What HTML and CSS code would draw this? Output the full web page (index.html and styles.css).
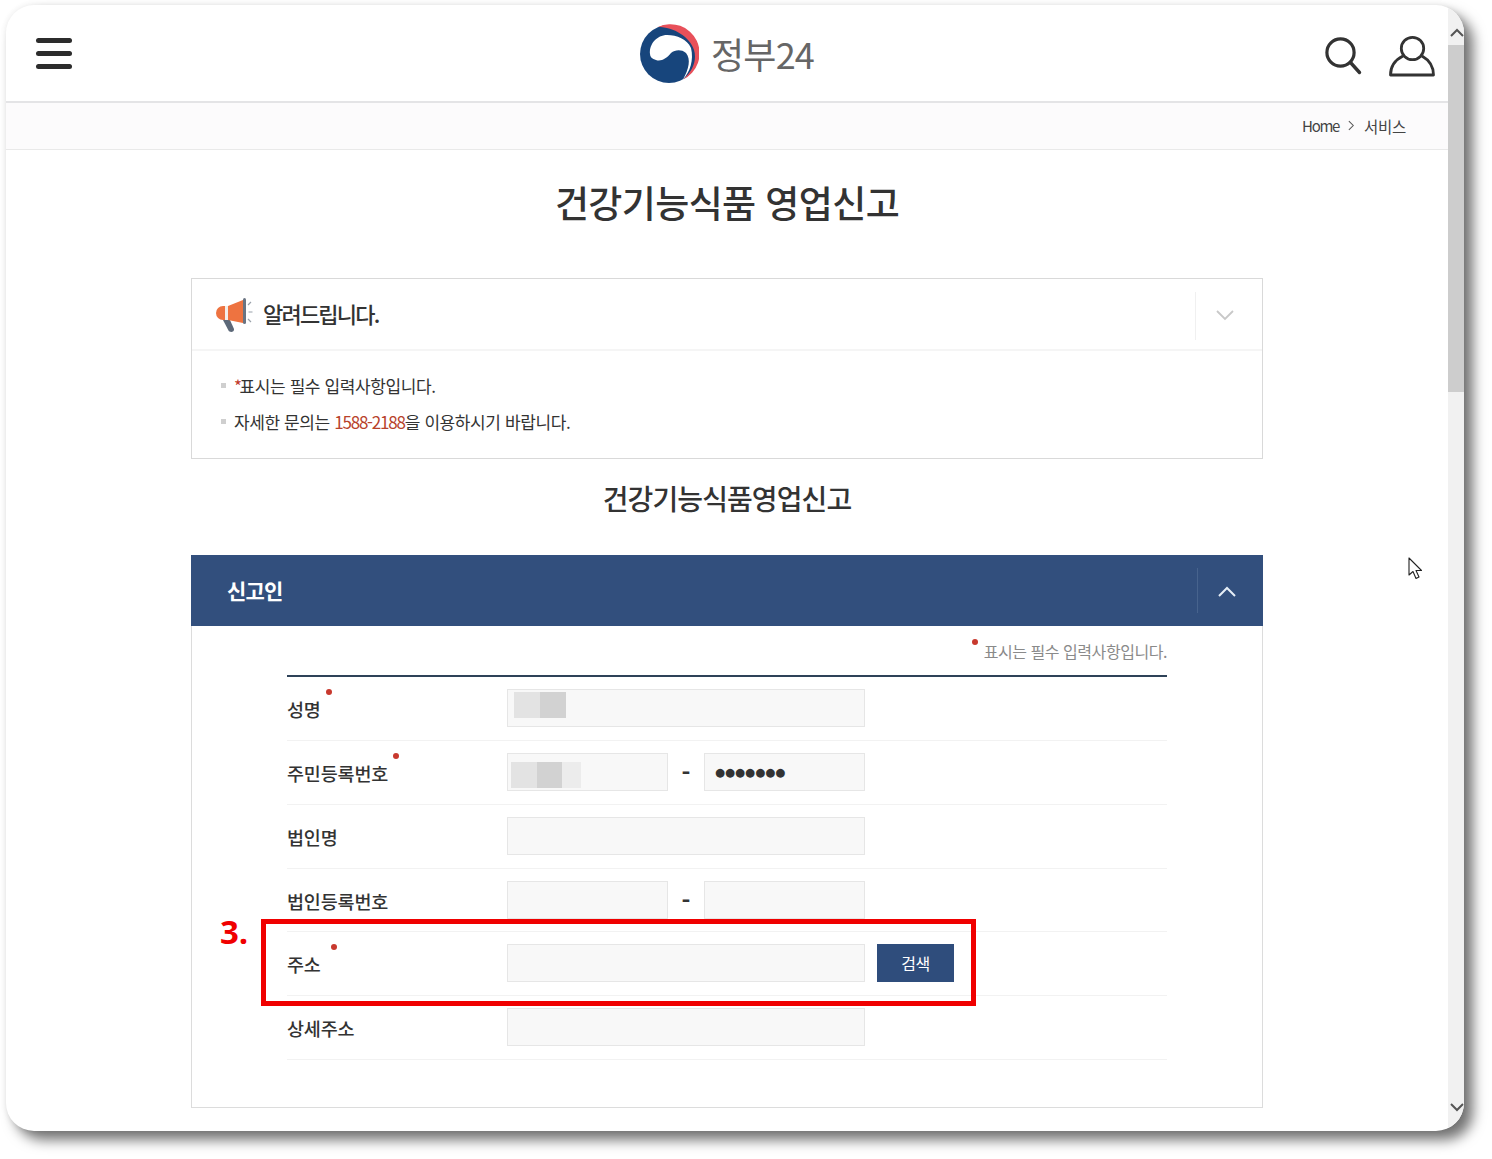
FILE: index.html
```html
<!DOCTYPE html>
<html lang="ko">
<head>
<meta charset="utf-8">
<title>건강기능식품 영업신고</title>
<link rel="stylesheet" href="styles.css">
</head>
<body>
<div class="window">
  <div class="page">
    <header class="topbar">
      <div class="burger"><i></i><i></i><i></i></div>
      <div class="logo">
        <svg class="logo-mark" viewBox="0 0 60 60" width="60" height="60">
          <circle cx="30" cy="30" r="29" fill="#17457c"/>
          <path d="M19 3A29 29 0 0 1 44 55.500C54 47 58 36 55 26C51 13 35 3 19 3Z" fill="#e8505a"/>
          <path d="M11 30C10 20 18 11 28 11C38 11 48 15 52 24C55 36 51 48 44 55.500C50 45 52 35 47 29C42 25 36 26 32 29C28 34 22 38 17 36C13 35 11 33 11 30Z" fill="#fff"/>
        </svg>
        <span class="logo-text">정부24</span>
      </div>
      <div class="top-icons">
        <svg viewBox="0 0 40 42" width="40" height="42"><circle cx="17.500" cy="17.500" r="13.600" fill="none" stroke="#333" stroke-width="3.200"/><path d="M27.500 27.500L36.500 37.500" stroke="#333" stroke-width="3.400" stroke-linecap="round"/></svg>
        <svg viewBox="0 0 46 42" width="46" height="42"><circle cx="23.500" cy="13.500" r="11.200" fill="none" stroke="#333" stroke-width="2.800"/><path d="M14 21C6 25 1.500 32 1.500 40H44.500C44.500 32 40 25 33 21" fill="none" stroke="#333" stroke-width="2.800" stroke-linejoin="round"/></svg>
      </div>
    </header>
    <nav class="crumbs">
      <span class="crumb-home">Home</span>
      <svg viewBox="0 0 8 12" width="7" height="11"><path d="M1 1l5 5-5 5" fill="none" stroke="#555" stroke-width="1.200"/></svg>
      <span class="crumb-current">서비스</span>
    </nav>
    <main class="content">
      <h1 class="page-title">건강기능식품 영업신고</h1>
      <section class="notice">
        <div class="notice-head">
          <div class="notice-title">
            <svg class="megaphone" viewBox="0 0 38 36" width="38" height="36">
              <path d="M8 23H15L19 32C19.500 35 15 36 13.500 33.500Z" fill="#5c6878"/>
              <path d="M10 9H8A7 7 0 0 0 8 23H10Z" fill="#ee7340"/>
              <rect x="10" y="9" width="3" height="14" fill="#f3eee9"/>
              <path d="M13 9L28 3V26L13 23Z" fill="#ee7340"/>
              <rect x="28" y="1" width="3" height="26" rx="1.500" fill="#6a7482"/>
              <path d="M33 8l3-3M33.500 15h4M33 22l3 3" stroke="#9aa2ab" stroke-width="1.200"/>
            </svg>
            <span>알려드립니다.</span>
          </div>
          <div class="notice-toggle">
            <svg viewBox="0 0 18 11" width="18" height="11"><path d="M1 1l8 8 8-8" fill="none" stroke="#c8c8c8" stroke-width="1.800"/></svg>
          </div>
        </div>
        <ul class="notice-list">
          <li><span class="star">*</span>표시는 필수 입력사항입니다.</li>
          <li>자세한 문의는 <span class="phone">1588-2188</span>을 이용하시기 바랍니다.</li>
        </ul>
      </section>
      <h2 class="form-title">건강기능식품영업신고</h2>
      <section class="panel">
        <div class="panel-head">
          <span class="panel-title">신고인</span>
          <div class="panel-toggle">
            <svg viewBox="0 0 18 11" width="18" height="11"><path d="M1 10l8-8 8 8" fill="none" stroke="#e6eef6" stroke-width="2"/></svg>
          </div>
        </div>
        <div class="panel-body">
          <p class="required-note"><i class="dot note-dot"></i>표시는 필수 입력사항입니다.</p>
          <div class="rows">
            <div class="row">
              <label class="row-label req">성명<i class="dot"></i></label>
              <div class="field field-long mosaic-a"><span class="m1"></span><span class="m2"></span></div>
            </div>
            <div class="row">
              <label class="row-label req">주민등록번호<i class="dot"></i></label>
              <div class="field field-short mosaic-b"><span class="m1"></span><span class="m2"></span><span class="m3"></span></div>
              <span class="dash">-</span>
              <div class="field field-short secret">●●●●●●●</div>
            </div>
            <div class="row">
              <label class="row-label">법인명</label>
              <div class="field field-long"></div>
            </div>
            <div class="row">
              <label class="row-label">법인등록번호</label>
              <div class="field field-short"></div>
              <span class="dash">-</span>
              <div class="field field-short"></div>
            </div>
            <div class="row">
              <label class="row-label req">주소<i class="dot dot-far"></i></label>
              <div class="field field-long"></div>
              <button class="search-btn" type="button">검색</button>
            </div>
            <div class="row">
              <label class="row-label">상세주소</label>
              <div class="field field-long"></div>
            </div>
          </div>
        </div>
      </section>
    </main>
  </div>
  <aside class="scrollbar">
    <svg class="arrow" viewBox="0 0 14 9" width="14" height="9"><path d="M1 8l6-6 6 6" fill="none" stroke="#555" stroke-width="2"/></svg>
    <div class="thumb"></div>
    <svg class="arrow arrow-down" viewBox="0 0 14 9" width="14" height="9"><path d="M1 1l6 6 6-6" fill="none" stroke="#555" stroke-width="2"/></svg>
  </aside>
</div>
<div class="highlight"></div>
<div class="step">3.</div>
<svg class="cursor" viewBox="0 0 16 24" width="16" height="24"><path d="M1 1V18L5 14.500L8 21.500L11 20L8 13.500H13.500Z" fill="#fff" stroke="#222" stroke-width="1.100" stroke-linejoin="round"/></svg>
</body>
</html>
```

FILE: styles.css
```css
* { box-sizing: border-box; }
html, body { margin: 0; padding: 0; height: 1159px; overflow: hidden; background: #fff; }
body {
  font-family: "Noto Sans CJK KR", "Noto Sans", sans-serif;
  color: #333;
  position: relative;
}
.window {
  margin: 5px 0 0 6px;
  width: 1458px;
  height: 1126px;
  display: flex;
  background: #fff;
  border-radius: 28px;
  overflow: hidden;
  box-shadow: 9px 9px 13px rgba(0,0,0,.55), 0 0 6px rgba(0,0,0,.08);
}
.page { width: 1442px; display: flex; flex-direction: column; }
.topbar {
  height: 98px;
  flex: none;
  border-bottom: 2px solid #e4e4e6;
  display: flex;
  align-items: center;
  justify-content: space-between;
  position: relative;
  padding: 0 13px 0 30px;
}
.burger { display: flex; flex-direction: column; gap: 8px; width: 36px; }
.burger i { display: block; height: 5px; border-radius: 3px; background: #2c2c2c; }
.logo {
  position: absolute;
  left: 633px;
  top: 19px;
  display: flex;
  align-items: center;
  gap: 12px;
}
.logo-mark { flex: none; }
.logo-text { font-size: 36px; font-weight: 400; line-height: 58px; padding-bottom: 2px; color: #666; letter-spacing: -.8px; }
.top-icons { display: flex; align-items: center; gap: 26px; margin-top: 6px; }
.crumbs {
  height: 47px;
  flex: none;
  background: #fcfbfc;
  border-bottom: 1px solid #e9e9e9;
  display: flex;
  align-items: center;
  justify-content: flex-end;
  gap: 9px;
  padding: 0 42px 1px 0;
  font-size: 15px;
  color: #444;
}
.crumb-home { letter-spacing: -1.300px; }
.crumb-current { font-size: 15.500px; letter-spacing: -.3px; }
.content { width: 1072px; margin: 0 auto; }
.page-title {
  margin: 24px 0 0;
  height: 104px;
  font-size: 37px;
  line-height: 56px;
  font-weight: 500;
  letter-spacing: -.6px;
  text-align: center;
  color: #333;
}
.notice { height: 181px; border: 1px solid #d9d9d9; }
.notice-head { height: 72px; display: flex; justify-content: space-between; border-bottom: 2px solid #f5f5f5; }
.notice-title { display: flex; align-items: center; gap: 10px; padding: 0 0 3px 23px; font-size: 22px; font-weight: 500; letter-spacing: -1.800px; color: #333; }
.megaphone { margin-top: 4px; }
.notice-toggle { width: 67px; margin: 13px 0 9px; border-left: 1px solid #f0f0f0; display: flex; align-items: center; justify-content: center; padding: 0 8px 2px 0; }
.notice-list { margin: 0; padding: 17px 0 0 29px; list-style: none; font-size: 17px; color: #333; letter-spacing: -.4px; }
.notice-list li { height: 36px; line-height: 36px; position: relative; padding-left: 13px; }
.notice-list li::before { content: ""; position: absolute; left: 0; top: 15px; width: 5px; height: 5px; background: #cfcfcf; }
.star { color: #c0392b; margin-right: -2px; }
.phone { color: #b8432c; letter-spacing: -1.200px; }
.form-title {
  margin: 0;
  height: 96px;
  padding-top: 17px;
  font-size: 28px;
  line-height: 44px;
  font-weight: 500;
  letter-spacing: -.9px;
  text-align: center;
  color: #333;
}
.panel { height: 553px; border: 1px solid #dcdcdc; border-top: 0; }
.panel-head {
  margin: 0 -1px;
  height: 71px;
  background: #324f7d;
  display: flex;
  justify-content: space-between;
  align-items: stretch;
  color: #fff;
}
.panel-title { padding-left: 36px; font-size: 21px; font-weight: 700; line-height: 71px; letter-spacing: -.8px; }
.panel-toggle { width: 66px; margin: 13px 0; border-left: 1px solid #47638d; display: flex; align-items: center; justify-content: center; padding: 2px 8px 0 0; }
.panel-body { width: 880px; margin: 0 auto 0; }
.required-note {
  margin: 0;
  height: 49px;
  padding-top: 12px;
  text-align: right;
  font-size: 16px;
  line-height: 26px;
  letter-spacing: -.45px;
  color: #8a8a8a;
  position: relative;
}
.dot { position: absolute; width: 6px; height: 6px; border-radius: 50%; background: #c8392e; }
.note-dot { right: 189px; top: 13px; }
.rows { border-top: 2px solid #2e4258; }
.row { height: 63.850px; display: flex; align-items: flex-start; padding-top: 12px; border-bottom: 1px solid #f2f2f2; }
.row-label { width: 220px; flex: none; font-size: 18.500px; font-weight: 500; line-height: 40px; letter-spacing: -.15px; color: #333; }
.req { position: relative; }
.req .dot { margin-left: 5px; margin-top: 0; }
.req .dot-far { margin-left: 10px; }
.field { height: 38px; background: #f8f8f8; border: 1px solid #e6e6e6; flex: none; display: flex; align-items: flex-start; }
.field-long { width: 358px; }
.field-short { width: 161px; }
.mosaic-a { padding: 2px 0 0 6px; }
.mosaic-a span { width: 26px; height: 26px; display: block; }
.mosaic-b { padding: 8px 0 0 3px; }
.mosaic-b span { height: 26px; display: block; }
.mosaic-b .m1 { width: 26px; }
.mosaic-b .m2 { width: 25px; }
.mosaic-b .m3 { width: 19px; }
.m1 { background: #e3e3e3; }
.m2 { background: #d2d2d2; }
.m3 { background: #ececec; }
.dash { width: 36px; flex: none; text-align: center; font-size: 24px; font-weight: 700; line-height: 38px; color: #333; }
.secret { padding-left: 10px; font-family: "DejaVu Sans", sans-serif; font-size: 11.500px; line-height: 36px; letter-spacing: 0; color: #333; }
.search-btn {
  width: 77px;
  height: 38px;
  margin-left: 12px;
  padding: 0;
  border: 0;
  background: #2f4d7c;
  color: #fff;
  font-family: inherit;
  font-size: 16px;
  letter-spacing: -.5px;
}
.scrollbar { width: 16px; background: #f1f1f1; position: relative; padding-top: 40px; }
.thumb { height: 347px; background: #cdcdcd; }
.arrow { position: absolute; left: 2px; top: 23px; }
.arrow-down { top: auto; bottom: 19px; }
.highlight {
  position: absolute;
  left: 261px;
  top: 919px;
  width: 715px;
  height: 87px;
  border: 5px solid #f00000;
}
.step {
  position: absolute;
  left: 220px;
  top: 910px;
  font-family: "Open Sans", sans-serif;
  font-size: 33px;
  font-weight: 700;
  line-height: 44px;
  color: #f00000;
}
.cursor { position: absolute; left: 1408px; top: 557px; }
```
